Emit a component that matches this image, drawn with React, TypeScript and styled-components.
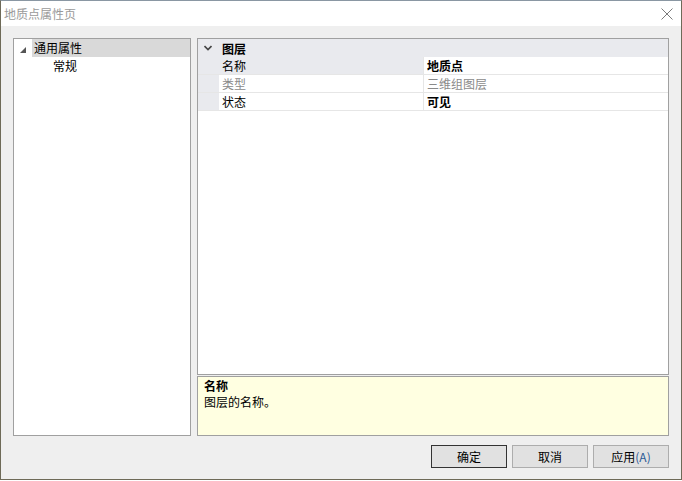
import styled, { createGlobalStyle } from "styled-components";

const GlobalStyle = createGlobalStyle`
  html, body {
    margin: 0;
    padding: 0;
    background: #ffffff;
  }
  body {
    font-family: "Noto Sans CJK SC", "Liberation Sans", sans-serif;
    font-size: 12px;
    color: #000;
  }
`;

interface Prop {
  name: string;
  value: string;
  readOnly?: boolean;
  selected?: boolean;
}

const props: Prop[] = [
  { name: "名称", value: "地质点", selected: true },
  { name: "类型", value: "三维组图层", readOnly: true },
  { name: "状态", value: "可见" },
];

const App = () => {
  return (
    <>
      <GlobalStyle />
      <Window>
        <TitleBar>
          <Title>地质点属性页</Title>
          <CloseIcon width="12" height="12" viewBox="0 0 12 12">
            <path d="M0.5 0.5 L11.5 11.5 M11.5 0.5 L0.5 11.5" stroke="#7a7a7a" strokeWidth="1" />
          </CloseIcon>
        </TitleBar>
        <Body>
          <Panels>
            <Tree>
              <TreeRow $selected>
                <Expander width="6" height="6" viewBox="0 0 6 6">
                  <path d="M6 0 L6 6 L0 6 Z" fill="#555" />
                </Expander>
                <TreeLabel $selected>通用属性</TreeLabel>
              </TreeRow>
              <TreeRow $indent={37}>
                <TreeLabel>常规</TreeLabel>
              </TreeRow>
            </Tree>
            <RightColumn>
              <Grid>
                <GroupRow>
                  <Gutter>
                    <svg width="8" height="6" viewBox="0 0 8 6">
                      <path d="M0.5 1 L4 4.5 L7.5 1" stroke="#444" strokeWidth="1.6" fill="none" />
                    </svg>
                  </Gutter>
                  <GroupTitle>图层</GroupTitle>
                </GroupRow>
                {props.map((p) => (
                  <PropRow key={p.name}>
                    <Gutter />
                    <NameCell $selected={p.selected} $readOnly={p.readOnly}>
                      {p.name}
                    </NameCell>
                    <ValueCell $readOnly={p.readOnly}>{p.value}</ValueCell>
                  </PropRow>
                ))}
                <GridFiller />
              </Grid>
              <Description>
                <DescTitle>名称</DescTitle>
                <DescText>图层的名称。</DescText>
              </Description>
            </RightColumn>
          </Panels>
          <ButtonBar>
            <Button $default>确定</Button>
            <Button>取消</Button>
            <Button>
              应用<Accel>(A)</Accel>
            </Button>
          </ButtonBar>
        </Body>
      </Window>
    </>
  );
};

export default App;

const Window = styled.div`
  box-sizing: border-box;
  width: 682px;
  height: 480px;
  border: 1px solid #6e6a58;
  border-top-color: #8a97a3;
  display: flex;
  flex-direction: column;
  background: #efefef;
`;

const TitleBar = styled.div`
  height: 25px;
  background: #ffffff;
  display: flex;
  align-items: center;
  justify-content: space-between;
  padding: 0 8px 0 3px;
  flex-shrink: 0;
`;

const Title = styled.span`
  color: #9a9a9a;
  font-size: 12px;
  line-height: 14px;
`;

const CloseIcon = styled.svg`
  display: block;
  margin-top: 1px;
`;

const Body = styled.div`
  flex: 1;
  display: flex;
  flex-direction: column;
  padding: 12px 12px 11px 12px;
`;

const Panels = styled.div`
  height: 398px;
  display: flex;
  gap: 6px;
`;

const Tree = styled.div`
  box-sizing: border-box;
  width: 178px;
  border: 1px solid #a0a0a0;
  background: #ffffff;
`;

const TreeRow = styled.div<{ $selected?: boolean; $indent?: number }>`
  height: 18px;
  display: flex;
  align-items: center;
  padding-left: ${(p) => (p.$indent ?? 6) + "px"};
`;

const Expander = styled.svg`
  display: block;
  margin: 3px 6px 0 0;
`;

const TreeLabel = styled.span<{ $selected?: boolean }>`
  flex: 1;
  height: 18px;
  line-height: 18px;
  padding-left: 2px;
  background: ${(p) => (p.$selected ? "#d9d9d9" : "transparent")};
`;

const RightColumn = styled.div`
  width: 472px;
  display: flex;
  flex-direction: column;
  gap: 1px;
`;

const Grid = styled.div`
  box-sizing: border-box;
  flex: 1;
  border: 1px solid #a0a0a0;
  background: #ffffff;
  display: flex;
  flex-direction: column;
`;

const GroupRow = styled.div`
  height: 18px;
  display: flex;
  align-items: center;
  background: #e9eaee;
`;

const Gutter = styled.div`
  width: 21px;
  height: 100%;
  flex-shrink: 0;
  display: flex;
  align-items: center;
  justify-content: center;
  background: #e9eaee;
  padding-right: 1px;
  box-sizing: border-box;
`;

const GroupTitle = styled.span`
  font-weight: bold;
  padding-left: 3px;
`;

const PropRow = styled.div`
  box-sizing: border-box;
  height: 18px;
  display: flex;
  border-bottom: 1px solid #e6e6e6;
`;

const NameCell = styled.div<{ $selected?: boolean; $readOnly?: boolean }>`
  width: 205px;
  box-sizing: border-box;
  padding-left: 3px;
  line-height: 17px;
  border-right: 1px solid #e6e6e6;
  background: ${(p) => (p.$selected ? "#e9eaee" : "#ffffff")};
  color: ${(p) => (p.$readOnly ? "#8a8a8a" : "#000")};
`;

const ValueCell = styled.div<{ $readOnly?: boolean }>`
  flex: 1;
  padding-left: 3px;
  line-height: 17px;
  font-weight: ${(p) => (p.$readOnly ? "normal" : "bold")};
  color: ${(p) => (p.$readOnly ? "#8a8a8a" : "#000")};
`;

const GridFiller = styled.div`
  flex: 1;
`;

const Description = styled.div`
  box-sizing: border-box;
  height: 60px;
  border: 1px solid #a0a0a0;
  background: #ffffe1;
  padding: 1px 6px;
`;

const DescTitle = styled.div`
  font-weight: bold;
  line-height: 15px;
`;

const DescText = styled.div`
  line-height: 15px;
  margin-top: 1px;
`;

const ButtonBar = styled.div`
  margin-top: 9px;
  display: flex;
  justify-content: flex-end;
  gap: 5px;
  padding-right: 0;
`;

const Button = styled.button<{ $default?: boolean }>`
  box-sizing: border-box;
  width: 76px;
  height: 23px;
  padding: 0;
  font-family: "Noto Sans CJK SC", "Liberation Sans", sans-serif;
  font-size: 12px;
  color: #000;
  background: #e1e1e1;
  border: 1px solid ${(p) => (p.$default ? "#333333" : "#adadad")};
  border-radius: 0;
`;

const Accel = styled.span`
  color: #2b5a95;
`;
